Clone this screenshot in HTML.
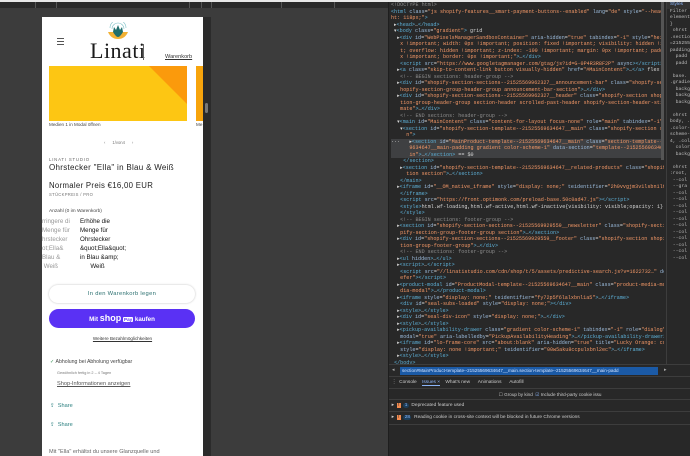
<!DOCTYPE html>
<html><head><meta charset="utf-8"><style>
*{margin:0;padding:0;box-sizing:border-box}
body{width:690px;height:456px;overflow:hidden;background:#3c3c3c;position:relative;font-family:"Liberation Sans",sans-serif}
.abs{position:absolute}
#top{left:0;top:0;width:690px;height:8px;background:#2a2a2a;border-top:2px solid #e8e8e8}
#page{left:42px;top:17px;width:161px;height:439px;background:#fff;overflow:hidden}
#scr{left:203px;top:17px;width:8px;height:439px;background:#2b2b2b}
#dev{left:388px;top:2px;width:302px;height:454px;background:#282828;border-left:1px solid #1e1e1e}
#code{left:0;top:0;width:275px;height:362px;overflow:hidden;font-family:"Liberation Mono",monospace;font-size:5.1px;line-height:6.5px;color:#d5d5d5;white-space:pre;padding-left:2px}
.t{color:#5db0d7}.a{color:#9bbbdc}.v{color:#f29766}.c{color:#8b8b8b}
.sel{background:#3f4042;display:block}
#styles{left:277px;top:0;width:25px;height:362px;border-left:1px solid #3d3d3d;background:#282828;font-family:"Liberation Mono",monospace;font-size:4.8px;line-height:6.5px;color:#bbb;overflow:hidden;white-space:pre}
.m{font-family:"Liberation Sans",sans-serif}
</style></head><body>
<div class="abs" id="top"></div>
<div class="abs" style="left:35px;top:2px;width:1px;height:6px;background:#555"></div>
<div class="abs" style="left:56px;top:2px;width:1px;height:6px;background:#555"></div>
<div class="abs" style="left:189px;top:2px;width:1px;height:6px;background:#555"></div>
<div class="abs" style="left:201px;top:2px;width:1px;height:6px;background:#555"></div>
<div class="abs" style="left:211px;top:2px;width:1px;height:6px;background:#555"></div>
<div class="abs" style="left:281px;top:2px;width:1px;height:6px;background:#555"></div>
<div class="abs" style="left:334px;top:2px;width:1px;height:6px;background:#555"></div>

<div class="abs" id="page">
 <div class="abs" style="left:15px;top:21px;width:7px;height:1px;background:#555;box-shadow:0 3px 0 #555,0 6px 0 #555"></div>
 <svg class="abs" style="left:65px;top:5px" width="22" height="19" viewBox="0 0 22 19">
  <path d="M3 6a8 8 0 0 1 16 0" fill="none" stroke="#7cc0c6" stroke-width=".6"/>
  <path d="M5 7a6 6 0 0 1 12 0" fill="none" stroke="#7cc0c6" stroke-width=".6"/>
  <path d="M1 10q10 0 20 0q-3 7-10 7q-7 0-10-7z" fill="#f2b134"/>
  <path d="M6 10l1-5 2 3 2-5 2 5 2-3 1 5q-3 5-5 5q-2 0-5-5z" fill="#1e6e6d"/>
 </svg>
 <div class="abs" style="left:48px;top:23px;font-family:'Liberation Serif',serif;font-size:22px;color:#1b1b1b;letter-spacing:.5px;line-height:22px">Linati</div>
 <div class="abs" style="left:101px;top:27px;width:3px;height:16px;border-left:1px solid #666"></div>
 <div class="abs" style="left:123px;top:37px;font-size:5.6px;color:#333;text-decoration:underline">Warenkorb</div>
 <div class="abs" style="left:7px;top:49px;width:138px;height:55px;background:#fdc613;overflow:hidden"><div style="position:absolute;left:100px;top:0;width:0;height:0;border-top:38px solid #fb9a0c;border-left:38px solid transparent"></div></div>
 <div class="abs" style="left:154px;top:49px;width:10px;height:55px;background:#f7a40c"></div>
 <div class="abs" style="left:7px;top:105px;font-size:4.6px;color:#444">Medien 1 in Modal öffnen</div>
 <div class="abs" style="left:154px;top:105px;font-size:4.6px;color:#444">Me</div>
 <div class="abs" style="left:62px;top:123px;font-size:4.2px;color:#777">‹ &nbsp;&nbsp;&nbsp;&nbsp; 1/von4 &nbsp;&nbsp;&nbsp;&nbsp; ›</div>
 <div class="abs" style="left:7px;top:140px;font-size:4.3px;color:#666;letter-spacing:.8px">LINATI STUDIO</div>
 <div class="abs" style="left:7px;top:146px;font-size:8px;color:#222;letter-spacing:.3px">Ohrstecker "Ella" in Blau &amp; Weiß</div>
 <div class="abs" style="left:7px;top:164px;font-size:7.8px;color:#222;letter-spacing:.3px">Normaler Preis €16,00 EUR</div>
 <div class="abs" style="left:7px;top:175px;font-size:4.2px;color:#777;letter-spacing:.3px">STÜCKPREIS / PRO</div>
 <div class="abs" style="left:7px;top:192px;font-size:4.8px;color:#444">Anzahl (0 im Warenkorb)</div>
 <div class="abs" style="left:0;top:200px;font-size:6.2px;line-height:9px;color:#999;white-space:pre">rringere di
Menge für
hrstecker
ot;Ella&amp;
Blau &amp;
 Weiß</div>
 <div class="abs" style="left:38px;top:200px;font-size:6.2px;line-height:9px;color:#111;white-space:pre">Erhöhe die
Menge für
Ohrstecker
&amp;quot;Ella&amp;quot;
in Blau &amp;amp;
      Weiß</div>
 <div class="abs" style="left:7px;top:268px;width:146px;height:18px;border-radius:9px;background:#fff;box-shadow:0 0 2px rgba(0,0,0,.25);text-align:center;font-size:5.8px;line-height:18px;color:#2a6f6f;letter-spacing:.3px">In den Warenkorb legen</div>
 <div class="abs" style="left:7px;top:292px;width:146px;height:19px;border-radius:10px;background:#5a31f4;text-align:center;font-size:6.2px;line-height:19px;color:#fff;font-weight:bold">Mit <span style="font-size:9px">shop</span> <span style="background:#fff;color:#5a31f4;border-radius:1px;padding:0 1px;font-size:4.6px">Pay</span> kaufen</div>
 <div class="abs" style="left:0;top:319px;width:161px;text-align:center;font-size:4.6px;color:#333;text-decoration:underline">Weitere Bezahlmöglichkeiten</div>
 <div class="abs" style="left:8px;top:342px;font-size:5.2px;color:#444"><span style="color:#2a8a4a">✓</span> Abholung bei Abholung verfügbar</div>
 <div class="abs" style="left:15px;top:354px;font-size:3.8px;color:#777">Gewöhnlich fertig in 2 – 4 Tagen</div>
 <div class="abs" style="left:15px;top:364px;font-size:5.6px;color:#555;text-decoration:underline">Shop-Informationen anzeigen</div>
 <div class="abs" style="left:8px;top:386px;font-size:5.6px;color:#2a7f7f">⇪ &nbsp;Share</div>
 <div class="abs" style="left:8px;top:405px;font-size:5.6px;color:#2a7f7f">⇪ &nbsp;Share</div>
 <div class="abs" style="left:7px;top:432px;font-size:5.6px;color:#666">Mit "Ella" erhältst du unsere Glanzquelle und</div>
</div>
<div class="abs" id="scr"><div style="margin:86px 0 0 2px;width:3px;height:10px;background:#777;border-radius:2px"></div></div>

<div class="abs" id="dev">
<div class="abs" id="code"><span class="c">&lt;!DOCTYPE html&gt;</span>
<span class="t">&lt;html</span> <span class="a">class</span>=<span class="v">"js shopify-features__smart-payment-buttons--enabled"</span> <span class="a">lang</span>=<span class="v">"de"</span> <span class="a">style</span>=<span class="v">"--header-heig</span>
<span class="v">ht: 118px;"</span><span class="t">&gt;</span>
 ▸<span class="t">&lt;head&gt;</span>…<span class="t">&lt;/head&gt;</span>
 ▾<span class="t">&lt;body</span> <span class="a">class</span>=<span class="v">"gradient"</span><span class="t">&gt;</span> grid
  ▸<span class="t">&lt;div</span> <span class="a">id</span>=<span class="v">"WebPixelsManagerSandboxContainer"</span> <span class="a">aria-hidden</span>=<span class="v">"true"</span> <span class="a">tabindex</span>=<span class="v">"-1"</span> <span class="a">style</span>=<span class="v">"height: 0p</span>
<span class="v">   x !important; width: 0px !important; position: fixed !important; visibility: hidden !importan</span>
<span class="v">   t; overflow: hidden !important; z-index: -100 !important; margin: 0px !important; padding: 0p</span>
<span class="v">   x !important; border: 0px !important;"</span><span class="t">&gt;</span>…<span class="t">&lt;/div&gt;</span>
   <span class="t">&lt;script</span> <span class="a">src</span>=<span class="v">"https://www.googletagmanager.com/gtag/js?id=G-0P4R3R8F2P"</span> <span class="a">async</span><span class="t">&gt;&lt;/script&gt;</span>
  ▸<span class="t">&lt;a</span> <span class="a">class</span>=<span class="v">"skip-to-content-link button visually-hidden"</span> <span class="a">href</span>=<span class="v">"#MainContent"</span><span class="t">&gt;</span>…<span class="t">&lt;/a&gt;</span> flex
   <span class="c">&lt;!-- BEGIN sections: header-group --&gt;</span>
  ▸<span class="t">&lt;div</span> <span class="a">id</span>=<span class="v">"shopify-section-sections--21525569962327__announcement-bar"</span> <span class="a">class</span>=<span class="v">"shopify-section s</span>
<span class="v">   hopify-section-group-header-group announcement-bar-section"</span><span class="t">&gt;</span>…<span class="t">&lt;/div&gt;</span>
  ▸<span class="t">&lt;div</span> <span class="a">id</span>=<span class="v">"shopify-section-sections--21525569962327__header"</span> <span class="a">class</span>=<span class="v">"shopify-section shopify-sec</span>
<span class="v">   tion-group-header-group section-header scrolled-past-header shopify-section-header-sticky ani</span>
<span class="v">   mate"</span><span class="t">&gt;</span>…<span class="t">&lt;/div&gt;</span>
   <span class="c">&lt;!-- END sections: header-group --&gt;</span>
  ▾<span class="t">&lt;main</span> <span class="a">id</span>=<span class="v">"MainContent"</span> <span class="a">class</span>=<span class="v">"content-for-layout focus-none"</span> <span class="a">role</span>=<span class="v">"main"</span> <span class="a">tabindex</span>=<span class="v">"-1"</span><span class="t">&gt;</span>
   ▾<span class="t">&lt;section</span> <span class="a">id</span>=<span class="v">"shopify-section-template--21525569634647__main"</span> <span class="a">class</span>=<span class="v">"shopify-section sectio</span>
<span class="v">     n"</span><span class="t">&gt;</span>
<span class="sel">···   ▸<span class="t">&lt;section</span> <span class="a">id</span>=<span class="v">"MainProduct-template--21525569634647__main"</span> <span class="a">class</span>=<span class="v">"section-template--2152556</span>
<span class="v">      9634647__main-padding gradient color-scheme-1"</span> <span class="a">data-section</span>=<span class="v">"template--21525569634647__ma</span>
<span class="v">      in"</span><span class="t">&gt;</span>…<span class="t">&lt;/section&gt;</span> == $0</span>    <span class="t">&lt;/section&gt;</span>
   ▸<span class="t">&lt;section</span> <span class="a">id</span>=<span class="v">"shopify-section-template--21525569634647__related-products"</span> <span class="a">class</span>=<span class="v">"shopify-sec</span>
<span class="v">     tion section"</span><span class="t">&gt;</span>…<span class="t">&lt;/section&gt;</span>
   <span class="t">&lt;/main&gt;</span>
  ▸<span class="t">&lt;iframe</span> <span class="a">id</span>=<span class="v">"__OM_native_iframe"</span> <span class="a">style</span>=<span class="v">"display: none;"</span> <span class="a">teidentifier</span>=<span class="v">"2h0vvgjm3v1lsbn1ltj"</span><span class="t">&gt;</span>…
   <span class="t">&lt;/iframe&gt;</span>
   <span class="t">&lt;script</span> <span class="a">src</span>=<span class="v">"https://front.optimonk.com/preload-base.50c0ad47.js"</span><span class="t">&gt;&lt;/script&gt;</span>
   <span class="t">&lt;style&gt;</span>html.wf-loading,html.wf-active,html.wf-inactive{visibility: visible;opacity: 1}
   <span class="t">&lt;/style&gt;</span>
   <span class="c">&lt;!-- BEGIN sections: footer-group --&gt;</span>
  ▸<span class="t">&lt;section</span> <span class="a">id</span>=<span class="v">"shopify-section-sections--21525569929559__newsletter"</span> <span class="a">class</span>=<span class="v">"shopify-section sho</span>
<span class="v">   pify-section-group-footer-group section"</span><span class="t">&gt;</span>…<span class="t">&lt;/section&gt;</span>
  ▸<span class="t">&lt;div</span> <span class="a">id</span>=<span class="v">"shopify-section-sections--21525569929559__footer"</span> <span class="a">class</span>=<span class="v">"shopify-section shopify-sec</span>
<span class="v">   tion-group-footer-group"</span><span class="t">&gt;</span>…<span class="t">&lt;/div&gt;</span>
   <span class="c">&lt;!-- END sections: footer-group --&gt;</span>
  ▸<span class="t">&lt;ul</span> <span class="a">hidden</span><span class="t">&gt;</span>…<span class="t">&lt;/ul&gt;</span>
  ▸<span class="t">&lt;script&gt;</span>…<span class="t">&lt;/script&gt;</span>
   <span class="t">&lt;script</span> <span class="a">src</span>=<span class="v">"//linatistudio.com/cdn/shop/t/5/assets/predictive-search.js?v=1622732…"</span> <span class="a">defer</span>=<span class="v">"d</span>
<span class="v">   efer"</span><span class="t">&gt;&lt;/script&gt;</span>
  ▸<span class="t">&lt;product-modal</span> <span class="a">id</span>=<span class="v">"ProductModal-template--21525569634647__main"</span> <span class="a">class</span>=<span class="v">"product-media-modal me</span>
<span class="v">   dia-modal"</span><span class="t">&gt;</span>…<span class="t">&lt;/product-modal&gt;</span>
  ▸<span class="t">&lt;iframe</span> <span class="a">style</span>=<span class="v">"display: none;"</span> <span class="a">teidentifier</span>=<span class="v">"fy72p5f6lalxbnl1a5"</span><span class="t">&gt;</span>…<span class="t">&lt;/iframe&gt;</span>
   <span class="t">&lt;div</span> <span class="a">id</span>=<span class="v">"seal-subs-loaded"</span> <span class="a">style</span>=<span class="v">"display: none;"</span><span class="t">&gt;&lt;/div&gt;</span>
  ▸<span class="t">&lt;style&gt;</span>…<span class="t">&lt;/style&gt;</span>
  ▸<span class="t">&lt;div</span> <span class="a">id</span>=<span class="v">"seal-div-icon"</span> <span class="a">style</span>=<span class="v">"display: none;"</span><span class="t">&gt;</span>…<span class="t">&lt;/div&gt;</span>
  ▸<span class="t">&lt;style&gt;</span>…<span class="t">&lt;/style&gt;</span>
  ▸<span class="t">&lt;pickup-availability-drawer</span> <span class="a">class</span>=<span class="v">"gradient color-scheme-1"</span> <span class="a">tabindex</span>=<span class="v">"-1"</span> <span class="a">role</span>=<span class="v">"dialog"</span> <span class="a">aria-</span>
<span class="a">   modal</span>=<span class="v">"true"</span> <span class="a">aria-labelledby</span>=<span class="v">"PickupAvailabilityHeading"</span><span class="t">&gt;</span>…<span class="t">&lt;/pickup-availability-drawer&gt;</span>
  ▸<span class="t">&lt;iframe</span> <span class="a">id</span>=<span class="v">"lo-frame-core"</span> <span class="a">src</span>=<span class="v">"about:blank"</span> <span class="a">aria-hidden</span>=<span class="v">"true"</span> <span class="a">title</span>=<span class="v">"Lucky Orange: core"</span>
<span class="a">   style</span>=<span class="v">"display: none !important;"</span> <span class="a">teidentifier</span>=<span class="v">"00w5aku8ccpulxbnl2ec"</span><span class="t">&gt;</span>…<span class="t">&lt;/iframe&gt;</span>
  ▸<span class="t">&lt;style&gt;</span>…<span class="t">&lt;/style&gt;</span>
 <span class="t">&lt;/body&gt;</span></div>
<div class="abs" style="left:272px;top:0;width:3px;height:158px;background:#555"></div>
<div class="abs" id="styles"><div style="background:#333;color:#8ab4f8;padding-left:3px" class="m">Styles</div> Filter
 element.
 }
  ohrst
 .section
 =2152556
 padding
   padd
   padd

  base.
 .gradie
   backg
   backg
   backg

  ohrst
 body, .c
 .color-
 scheme-
 4, .col
   color
   backg

  ohrst
 :root, .
  --col
  --gra
  --col
  --col
  --col
  --col
  --col
  --col
  --col
  --col
  --col
  --col
  --col</div>
<div class="abs" style="left:0;top:362px;width:302px;height:12px;background:#282828;border-top:1px solid #3d3d3d"><div style="position:absolute;left:11px;top:2px;width:258px;height:8px;background:#1b5aa6;font-size:4.6px;line-height:8px;color:#cfe1ff;white-space:nowrap;overflow:hidden;padding-left:2px" class="m">section#MainProduct-template--21525569634647__main.section-template--21525569634647__main-padd</div><div style="position:absolute;left:3px;top:2px;font-size:5px;color:#aaa">◂</div><div style="position:absolute;left:275px;top:2px;font-size:5px;color:#aaa">▸</div></div>
<div class="abs m" style="left:0;top:374px;width:302px;height:12px;background:#282828;border-top:1px solid #3d3d3d;font-size:4.8px;color:#ccc;line-height:11px;white-space:pre">  ⋮  Console    <span style="color:#8ab4f8;border-bottom:1px solid #8ab4f8">Issues ×</span>    What's new      Animations      Autofill</div>
<div class="abs m" style="left:0;top:386px;width:302px;height:11px;background:#282828;border-top:1px solid #3d3d3d;font-size:4.6px;color:#ccc;line-height:11px;white-space:pre">                                                                                      ☐ Group by kind  <span style="color:#8ab4f8">☑</span> Include third-party cookie issu</div>
<div class="abs m" style="left:0;top:397px;width:302px;height:13px;border-top:1px solid #3d3d3d;border-bottom:1px solid #3d3d3d;font-size:4.8px;color:#ccc;line-height:12px;white-space:pre">  ▸  <span style="background:#f28b50;color:#222"> ! </span>  <span style="background:#1d3e5a;border-radius:3px;color:#8ab4f8"> 1 </span>  Deprecated feature used</div>
<div class="abs m" style="left:0;top:410px;width:302px;height:13px;border-bottom:1px solid #3d3d3d;font-size:4.8px;color:#ccc;line-height:12px;white-space:pre">  ▸  <span style="background:#f28b50;color:#222"> ! </span>  <span style="background:#1d3e5a;border-radius:3px;color:#8ab4f8"> 28 </span>  Reading cookie in cross-site context will be blocked in future Chrome versions</div>
</div>
</body></html>
